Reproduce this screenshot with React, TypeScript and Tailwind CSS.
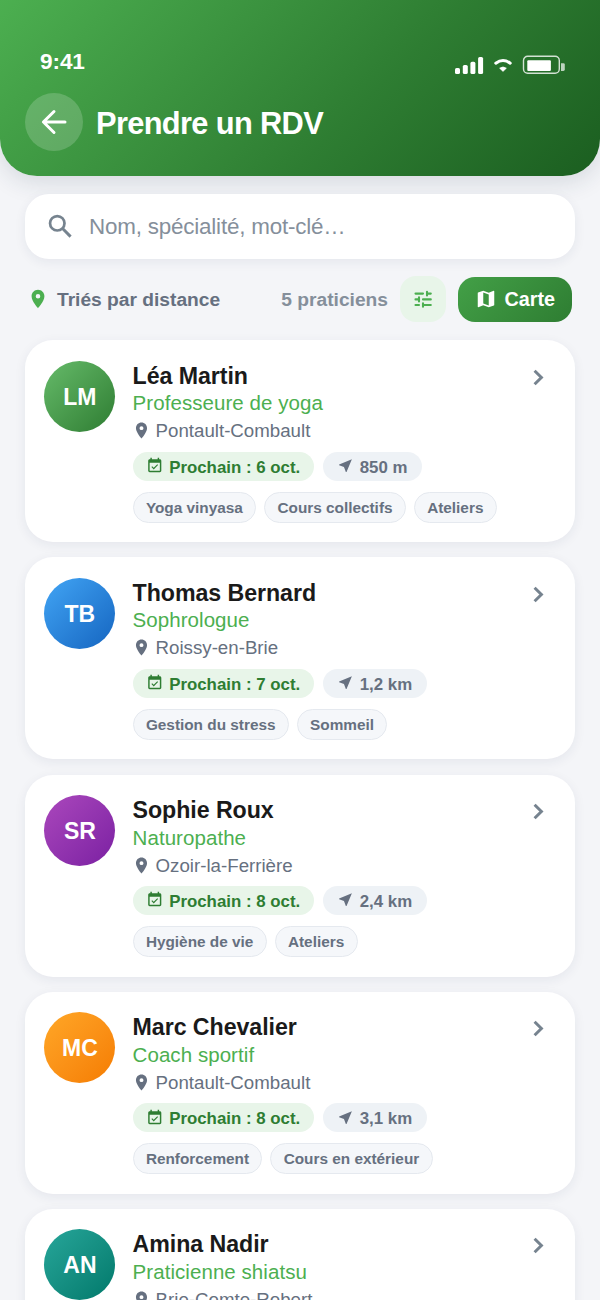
import { MdEventAvailable, MdLocationOn, MdMap, MdNearMe } from "react-icons/md";

type Practitioner = {
  initials: string;
  name: string;
  job: string;
  city: string;
  next: string;
  distance: string;
  tags: string[];
  avatar: string;
};

const practitioners: Practitioner[] = [
  {
    initials: "LM",
    name: "Léa Martin",
    job: "Professeure de yoga",
    city: "Pontault-Combault",
    next: "6 oct.",
    distance: "850 m",
    tags: ["Yoga vinyasa", "Cours collectifs", "Ateliers"],
    avatar: "from-[#66bb6a] to-[#2e7d32]",
  },
  {
    initials: "TB",
    name: "Thomas Bernard",
    job: "Sophrologue",
    city: "Roissy-en-Brie",
    next: "7 oct.",
    distance: "1,2 km",
    tags: ["Gestion du stress", "Sommeil"],
    avatar: "from-[#42a5f5] to-[#1565c0]",
  },
  {
    initials: "SR",
    name: "Sophie Roux",
    job: "Naturopathe",
    city: "Ozoir-la-Ferrière",
    next: "8 oct.",
    distance: "2,4 km",
    tags: ["Hygiène de vie", "Ateliers"],
    avatar: "from-[#ab47bc] to-[#7b1fa2]",
  },
  {
    initials: "MC",
    name: "Marc Chevalier",
    job: "Coach sportif",
    city: "Pontault-Combault",
    next: "8 oct.",
    distance: "3,1 km",
    tags: ["Renforcement", "Cours en extérieur"],
    avatar: "from-[#ffa726] to-[#f57c00]",
  },
  {
    initials: "AN",
    name: "Amina Nadir",
    job: "Praticienne shiatsu",
    city: "Brie-Comte-Robert",
    next: "9 oct.",
    distance: "4,6 km",
    tags: ["Shiatsu", "Ateliers"],
    avatar: "from-[#26a69a] to-[#00796b]",
  },
];

function StatusIcons() {
  return (
    <svg width="112" height="22" viewBox="0 0 112 22" fill="none">
      <g fill="#fff">
        <rect x="2" y="14" width="5" height="6" rx="1.6" />
        <rect x="9.8" y="11" width="5" height="9" rx="1.6" />
        <rect x="17.4" y="7.8" width="5" height="12.2" rx="1.6" />
        <rect x="25.1" y="3" width="5" height="17" rx="1.6" />
        <path d="M46.6 14.2Q50 11.6 53.4 14.2L50 17.4Z" stroke="#fff" strokeWidth=".6" strokeLinejoin="round" />
        <rect x="74.3" y="6.3" width="23.6" height="10.8" rx="1" />
        <path d="M108 9.2h2.4a1.4 1.4 0 0 1 1.4 1.4v5a1.4 1.4 0 0 1-1.4 1.4H108z" opacity=".7" />
      </g>
      <path d="M42.8 9.2Q50 3.8 57.2 9.2" stroke="#fff" strokeWidth="3" strokeLinecap="round" />
      <rect x="70.5" y="2.2" width="35.8" height="17" rx="4.2" stroke="#fff" strokeOpacity=".8" strokeWidth="1.4" />
    </svg>
  );
}

function SearchIcon() {
  return (
    <svg className="mr-[13.5px] shrink-0 text-[#76838f]" width="31" height="31" viewBox="0 0 24 24" fill="none" stroke="currentColor">
      <circle cx="9.5" cy="9.5" r="5.6" strokeWidth="2.1" />
      <path d="M13.6 13.6 19.8 19.8" strokeWidth="2.3" />
    </svg>
  );
}

function TuneIcon() {
  return (
    <svg width="24" height="24" viewBox="0 0 24 24" fill="none" stroke="currentColor" strokeWidth="2.1" strokeLinecap="round">
      <path d="M4.5 6.6H12M16 4.8V8.4M16 6.6H19.8M4.5 12.4H8M8 10.4V14.4M12 12.4H19.8M4.5 18H8M12 16.2V19.8M12 18H19.8" />
    </svg>
  );
}

function Card({ p }: { p: Practitioner }) {
  return (
    <article className="flex h-[202px] shrink-0 rounded-[28px] bg-white pl-[19.8px] pr-[22px] pt-[20.2px] shadow-[0_3px_12px_rgba(30,41,80,0.07)]">
      <div
        className={`flex size-[71px] shrink-0 items-center justify-center rounded-full bg-linear-135 pt-[2px] text-[23px] font-bold text-white ${p.avatar}`}
      >
        {p.initials}
      </div>
      <div className="ml-[17.2px] min-w-0 flex-1">
        <h2 className="h-[29.8px] text-[23.2px] font-bold leading-[31px] tracking-[-0.06px] text-[#1a1a1a]">{p.name}</h2>
        <p className="h-[26px] text-[20.5px] leading-[26px] tracking-[0.06px] text-[#4caf50]">{p.job}</p>
        <p className="flex h-[35.4px] items-start text-[18.7px] leading-[30px] text-[#667080]">
          <MdLocationOn className="-ml-[0.5px] mr-[4.5px] mt-[5px] size-[19px]" />
          {p.city}
        </p>
        <div className="flex h-[40px] gap-[9.5px] text-[16.85px] font-bold leading-[32px]">
          <span className="flex h-[29px] items-start rounded-full bg-[#e8f5e9] pl-[13.6px] pr-[13.4px] text-[#2e7d32]">
            <MdEventAvailable className="mr-[5.5px] mt-[5.5px] size-[17.5px]" />
            Prochain : {p.next}
          </span>
          <span className="flex h-[29px] items-start rounded-full bg-[#eef2f6] pl-[13.6px] pr-[14.4px] text-[#667080]">
            <MdNearMe className="mr-[6px] mt-[5.5px] size-[17px]" />
            {p.distance}
          </span>
        </div>
        <div className="flex gap-2 text-[15.35px] font-bold leading-[30px] text-[#667080]">
          {p.tags.map((tag) => (
            <span key={tag} className="h-[31px] rounded-full border-[1.5px] border-[#e5e9ef] bg-[#f5f7fa] px-[12.3px]">
              {tag}
            </span>
          ))}
        </div>
      </div>
      <svg className="shrink-0 text-[#76838f]" width="31" height="35" viewBox="0 0 31 35" fill="none" stroke="currentColor" strokeWidth="3">
        <path d="M12.6 9.7 19.4 16.5 12.6 23.3" strokeLinejoin="miter" />
      </svg>
    </article>
  );
}

export default function App() {
  return (
    <div className="flex h-[1300px] w-[600px] flex-col overflow-hidden bg-[#f4f5f8] font-['Liberation_Sans',Arial,sans-serif]">
      <header className="flex h-[176px] shrink-0 flex-col rounded-b-[37px] bg-linear-[135deg,#4caf50_0%,#2e7d32_60%,#1b5e20_100%] text-white shadow-[0_6px_24px_rgba(30,50,70,0.14)]">
        <div className="flex h-[93px] items-start justify-between pl-[40px] pr-[35px] pt-[50px]">
          <span className="text-[22.6px] font-bold leading-6 tracking-[-0.1px]">9:41</span>
          <div className="pt-[4px]">
            <StatusIcons />
          </div>
        </div>
        <div className="flex items-center pl-[25px]">
          <button className="flex size-[58px] items-center justify-center rounded-full bg-white/18">
            <svg width="28" height="28" viewBox="0 0 28 28" fill="none" stroke="currentColor" strokeWidth="3" strokeLinecap="round" strokeLinejoin="round">
              <path d="M25 14H3.6M14 3.5 3.4 14 14 24.5" />
            </svg>
          </button>
          <h1 className="ml-[13px] pt-[4px] text-[30.8px] font-bold leading-9 tracking-[-0.65px]">Prendre un RDV</h1>
        </div>
      </header>

      <main className="flex flex-col px-[24.6px] pt-[18px]">
        <div className="flex h-[65px] shrink-0 items-center rounded-[24px] bg-white pl-5 text-[22.4px] text-[#858f9b] shadow-[0_3px_12px_rgba(30,41,80,0.07)]">
          <SearchIcon />
          <span className="pt-px tracking-[-0.2px]">Nom, spécialité, mot-clé…</span>
        </div>

        <div className="mt-[17px] flex h-[46px] shrink-0 items-center pl-[2.8px] pr-[3.4px] text-[19.2px] font-bold">
          <MdLocationOn className="size-[22px] text-[#4caf50]" />
          <span className="ml-[7.6px] pt-[3px] text-[#667080]">Triés par distance</span>
          <span className="ml-auto pt-[3px] text-[#858f9b]">5 praticiens</span>
          <button className="ml-[12px] flex size-[46px] items-center justify-center rounded-[16px] bg-[#e8f5e9] text-[#4caf50]">
            <TuneIcon />
          </button>
          <button className="ml-[12px] flex h-[45px] w-[114px] items-center rounded-[17px] bg-linear-135 from-[#43a047] to-[#2e7d32] pl-[17px] text-[19.8px] text-white">
            <MdMap className="mr-[7.5px] size-[22px]" />
            <span className="pt-[2px]">Carte</span>
          </button>
        </div>

        <div className="mt-[18.4px] flex flex-col gap-[15.1px]">
          {practitioners.map((p) => (
            <Card key={p.initials} p={p} />
          ))}
        </div>
      </main>
    </div>
  );
}
